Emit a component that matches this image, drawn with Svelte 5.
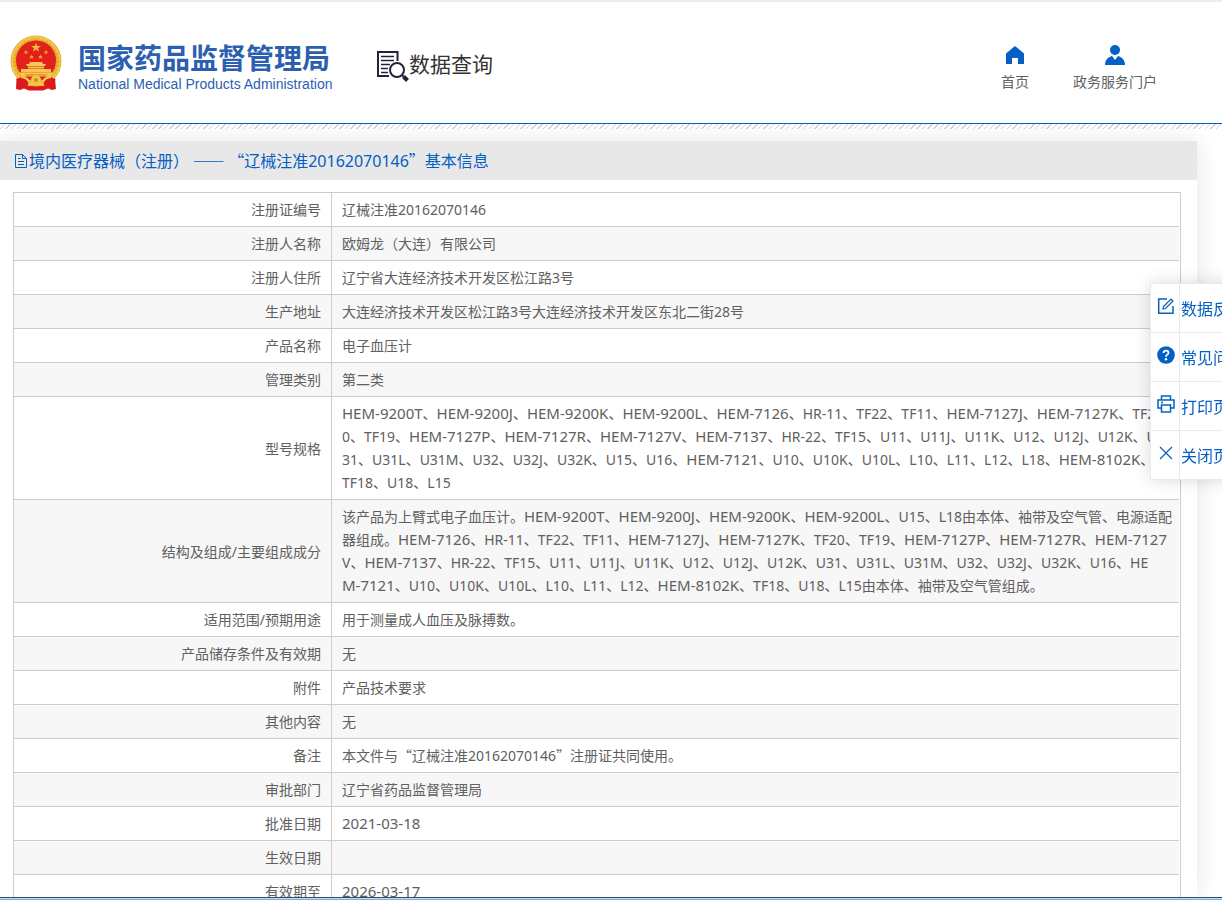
<script>
  const rows = [
    ['注册证编号', ['辽械注准20162070146']],
    ['注册人名称', ['欧姆龙（大连）有限公司']],
    ['注册人住所', ['辽宁省大连经济技术开发区松江路3号']],
    ['生产地址', ['大连经济技术开发区松江路3号大连经济技术开发区东北二街28号']],
    ['产品名称', ['电子血压计']],
    ['管理类别', ['第二类']],
    ['型号规格', [
      'HEM-9200T、HEM-9200J、HEM-9200K、HEM-9200L、HEM-7126、HR-11、TF22、TF11、HEM-7127J、HEM-7127K、TF2',
      '0、TF19、HEM-7127P、HEM-7127R、HEM-7127V、HEM-7137、HR-22、TF15、U11、U11J、U11K、U12、U12J、U12K、U',
      '31、U31L、U31M、U32、U32J、U32K、U15、U16、HEM-7121、U10、U10K、U10L、L10、L11、L12、L18、HEM-8102K、',
      'TF18、U18、L15'
    ]],
    ['结构及组成/主要组成成分', [
      '该产品为上臂式电子血压计。HEM-9200T、HEM-9200J、HEM-9200K、HEM-9200L、U15、L18由本体、袖带及空气管、电源适配',
      '器组成。HEM-7126、HR-11、TF22、TF11、HEM-7127J、HEM-7127K、TF20、TF19、HEM-7127P、HEM-7127R、HEM-7127',
      'V、HEM-7137、HR-22、TF15、U11、U11J、U11K、U12、U12J、U12K、U31、U31L、U31M、U32、U32J、U32K、U16、HE',
      'M-7121、U10、U10K、U10L、L10、L11、L12、HEM-8102K、TF18、U18、L15由本体、袖带及空气管组成。'
    ]],
    ['适用范围/预期用途', ['用于测量成人血压及脉搏数。']],
    ['产品储存条件及有效期', ['无']],
    ['附件', ['产品技术要求']],
    ['其他内容', ['无']],
    ['备注', ['本文件与“辽械注准20162070146”注册证共同使用。']],
    ['审批部门', ['辽宁省药品监督管理局']],
    ['批准日期', ['2021-03-18']],
    ['生效日期', ['']],
    ['有效期至', ['2026-03-17']]
  ];

  // Splits a line into Chinese runs, short Latin runs and long hyphenated codes.
  function runs(text) {
    return text
      .split(/([A-Za-z0-9/-]+)/)
      .filter(Boolean)
      .map((t) => ({
        t,
        kind: !/^[A-Za-z0-9/-]/.test(t) ? 'han' : t.includes('-') && t.length > 5 ? 'code' : 'latin'
      }));
  }
</script>

{#snippet line(text)}{#each runs(text) as r}<span class={r.kind}>{r.t}</span>{/each}{/snippet}

<div class="page" lang="zh-CN">
  <header>
    <a class="brand" href="#home">
      <svg class="emblem" viewBox="0 0 52 56" aria-hidden="true">
        <path d="M9 38 6.500 44 6 54 10 55 14 53.500 19 55.500H33L38 53.500 42 55 46 54 45 44 43 38Z" fill="#dc1a1c" />
        <circle cx="26" cy="26" r="25.500" fill="#e3a92f" />
        <circle cx="26" cy="26" r="23.300" fill="none" stroke="#f3c74b" stroke-width="3" />
        <circle cx="26" cy="26" r="22.500" fill="none" stroke="#d99a2b" stroke-width="1" stroke-dasharray="2 2" />
        <circle cx="26" cy="25.500" r="20" fill="#e2201c" />
        <path d="M26 7.500 27.200 11 31 11 28 13.200 29.100 16.800 26 14.600 22.900 16.800 24 13.200 21 11 24.800 11Z" fill="#f6b93a" />
        <g fill="#f3a534">
          <path d="M16 14.800l.6 1.600h1.700l-1.300 1.100.5 1.700-1.500-1-1.500 1 .5-1.700-1.300-1.100h1.700z" />
          <path d="M36 14.800l.6 1.600h1.700l-1.300 1.100.5 1.700-1.500-1-1.500 1 .5-1.700-1.300-1.100h1.700z" />
          <path d="M21.500 19.500l.6 1.600h1.700l-1.300 1.100.5 1.700-1.500-1-1.500 1 .5-1.700-1.300-1.100h1.700z" />
          <path d="M30.500 19.500l.6 1.600h1.700l-1.300 1.100.5 1.700-1.500-1-1.500 1 .5-1.700-1.300-1.100h1.700z" />
        </g>
        <g fill="#f7c850">
          <path d="M20 27h12l1 2h3l-1 2H17l-1-2h3zM18 31.500h16v2H18zM11 34h30v3.500H11z" />
          <path d="M8 37.500h36l-4 4H12z" />
        </g>
        <path d="M14 39h24l-3 2H17z" fill="#e2a02c" />
        <path d="M6 45c5-4 10-4 14-1l-2 8c-3 3-5-1-8-1l2-4zM46 45c-5-4-10-4-14-1l2 8c3 3 5-1 8-1l-2-4z" fill="#dc1a1c" />
        <circle cx="26" cy="45" r="5" fill="#f3c54a" />
        <circle cx="26" cy="45" r="2" fill="#d28c22" />
        <path d="M11 42c4 0 7 2 9 6M41 42c-4 0-7 2-9 6M18 50c5-2 11-2 16 0" fill="none" stroke="#f3c54a" stroke-width="2.500" />
      </svg>
      <span class="names">
        <strong>国家药品监督管理局</strong>
        <span class="english">National Medical Products Administration</span>
      </span>
    </a>
    <a class="query" href="#query">
      <svg width="32" height="32" viewBox="0 0 32 32" fill="none" stroke="#25233a" aria-hidden="true">
        <path d="M20.500 10V1H1v24h11" stroke-width="2" />
        <path d="M4 5.500h13M4 9.500h13M4 13.500h9M4 17.500h7M4 21.500h7" stroke-width="1.500" />
        <circle cx="20" cy="19" r="7" stroke-width="2" />
        <path d="M25 24l1.500 1.500" stroke-width="2" />
        <path d="M26.500 25.500l4 4" stroke-width="4" />
      </svg>
      <span>数据查询</span>
    </a>
    <nav>
      <a href="#index">
        <svg width="20" height="20" viewBox="0 0 20 20" aria-hidden="true"><path d="M10 1 19 8.500V19h-6v-6H7v6H1V8.500z" fill="#0460c4" /></svg>
        首页
      </a>
      <a href="#portal">
        <svg width="20" height="20" viewBox="0 0 20 20" aria-hidden="true"><circle cx="10" cy="5" r="5" fill="#0460c4" /><path d="M0 20c0-5 3-8 7-9l3 4 3-4c4 1 7 4 7 9z" fill="#0460c4" /></svg>
        政务服务门户
      </a>
    </nav>
  </header>
  <div class="hatch"></div>

  <main>
    <h1>
      <svg width="15" height="16" viewBox="0 0 15 16" fill="none" stroke="#0460c4" aria-hidden="true">
        <path d="M1.500 1.500h7l4 4v9h-11zM8.500 1.500v4h4M4 5.500h2.500M4 8.500h6M4 11.500h6" />
      </svg>
      <span>境内医疗器械（注册） —— “辽械注准<span class="latin">20162070146</span>”基本信息</span>
    </h1>
    <div class="sheet">
      <table>
        <tbody>
          {#each rows as [name, lines]}
            <tr>
              <th scope="row">{@render line(name)}</th>
              <td>{#each lines as text}<div>{@render line(text)}</div>{/each}</td>
            </tr>
          {/each}
        </tbody>
      </table>
    </div>
  </main>

  <aside>
    <a href="#feedback">
      <span class="icon"><svg width="18" height="18" viewBox="0 0 18 18" fill="none" stroke="#0460c4" stroke-width="1.500" aria-hidden="true"><path d="M10 2H1.700v14.300H16V9" /><path d="M6.500 9.500 14 2l2 2-7.500 7.500-2.500.5z" stroke-width="1.200" /></svg></span>
      <span class="label">数据反馈</span>
    </a>
    <a href="#faq">
      <span class="icon"><svg width="18" height="18" viewBox="0 0 18 18" aria-hidden="true"><circle cx="9" cy="9" r="8.800" fill="#0460c4" /><path d="M6.500 7c0-3.200 5-3.200 5-.3 0 1.900-2.500 1.900-2.500 4" fill="none" stroke="#fff" stroke-width="1.800" /><circle cx="9" cy="13.200" r="1.200" fill="#fff" /></svg></span>
      <span class="label">常见问题</span>
    </a>
    <a href="#print">
      <span class="icon"><svg width="18" height="18" viewBox="0 0 18 18" fill="none" stroke="#0460c4" stroke-width="1.500" aria-hidden="true"><path d="M4.500 5V1h9v4M4.500 13H1V5h16v8h-3.500M4.500 10h9v7h-9zM4 7.500h2" /></svg></span>
      <span class="label">打印页面</span>
    </a>
    <a href="#close">
      <span class="icon"><svg width="18" height="18" viewBox="0 0 18 18" fill="none" stroke="#0460c4" stroke-width="1.200" aria-hidden="true"><path d="M3 3l12 12M15 3 3 15" /></svg></span>
      <span class="label">关闭页面</span>
    </a>
  </aside>
  <footer></footer>
</div>

<style>
  :global(body) {
    margin: 0;
    overflow: hidden;
  }
  .page {
    height: 100vh;
    box-sizing: border-box;
    border-top: 2px solid #ececec;
    display: flex;
    flex-direction: column;
    overflow: hidden;
    background: #fff;
    color: #606060;
    font: 14px/23px 'Noto Sans CJK SC', sans-serif;
  }
  a {
    color: inherit;
    text-decoration: none;
  }
  svg {
    display: block;
    flex: none;
  }
  .latin,
  .code {
    font-family: 'Noto Sans', sans-serif;
  }
  .code {
    font-size: 15px;
  }
  header {
    flex: none;
    height: 121px;
    display: flex;
    align-items: center;
    border-bottom: 1px solid #0460c4;
    padding: 0 65px 0 10px;
  }
  .brand {
    display: flex;
    align-items: center;
    gap: 16px;
    width: 324px;
    white-space: nowrap;
    color: #2c5fb0;
  }
  .emblem {
    width: 52px;
    height: 56px;
  }
  .names {
    display: flex;
    flex-direction: column;
    padding-top: 8px;
  }
  .names strong {
    font-size: 28px;
    line-height: 34px;
  }
  .english {
    font: 14px/20px 'Liberation Sans', sans-serif;
  }
  .query {
    display: flex;
    align-items: center;
    margin-left: 43px;
    color: #333;
    font-size: 21px;
    line-height: 32px;
  }
  .query svg {
    margin-top: 8px;
  }
  nav {
    display: flex;
    gap: 44px;
    margin-left: auto;
    padding-top: 12px;
  }
  nav a {
    display: flex;
    flex-direction: column;
    align-items: center;
    gap: 5px;
  }
  .hatch {
    flex: none;
    height: 5px;
    background: repeating-linear-gradient(135deg, #fff 0 3px, #d4d4d4 3px 4px);
  }
  main {
    flex: 1;
    min-height: 0;
    margin: 12px 25px 0 0;
    background: #fff;
    box-shadow: 0 0 24px rgba(0, 0, 0, 0.1);
  }
  h1 {
    display: flex;
    align-items: center;
    margin: 0;
    padding: 2px 14px 0;
    height: 36px;
    background: #e8e8e8;
    border-bottom: 1px solid #e6eaf5;
    color: #0460c4;
    font-size: 16px;
    font-weight: 400;
  }
  .sheet {
    margin: 12px 16px 0 13px;
    border: 1px solid #ccc;
    border-bottom: 0;
    padding-right: 1px;
  }
  table {
    width: 100%;
    border-collapse: collapse;
    table-layout: fixed;
  }
  th,
  td {
    height: 23px;
    padding: 5px 10px;
    border-bottom: 1px solid #ccc;
    font-weight: 400;
  }
  th {
    width: 297px;
    text-align: right;
    border-right: 1px solid #ccc;
  }
  td {
    white-space: nowrap;
    overflow: hidden;
  }
  tr:nth-child(even) {
    background: #f7f7f7;
  }
  aside {
    position: fixed;
    top: 283px;
    right: -25px;
    background: #fff;
    border: 1px solid #e6eaf5;
    box-shadow: 0 0 16px rgba(0, 0, 0, 0.15);
    color: #0460c4;
    font-size: 16px;
  }
  aside a {
    display: flex;
    height: 48px;
  }
  aside a + a {
    border-top: 1px solid #e6eaf5;
  }
  .icon {
    display: flex;
    align-items: center;
    width: 22px;
    padding: 0 0 4px 6px;
    border-right: 1px solid #e6eaf5;
  }
  .label {
    padding: 0 1px;
    line-height: 48px;
  }
  footer {
    position: relative;
    flex: none;
    height: 1px;
    border-top: 1px solid #34495e;
    border-bottom: 1px solid #86a9c8;
    background: #c4e0f7;
  }
</style>
